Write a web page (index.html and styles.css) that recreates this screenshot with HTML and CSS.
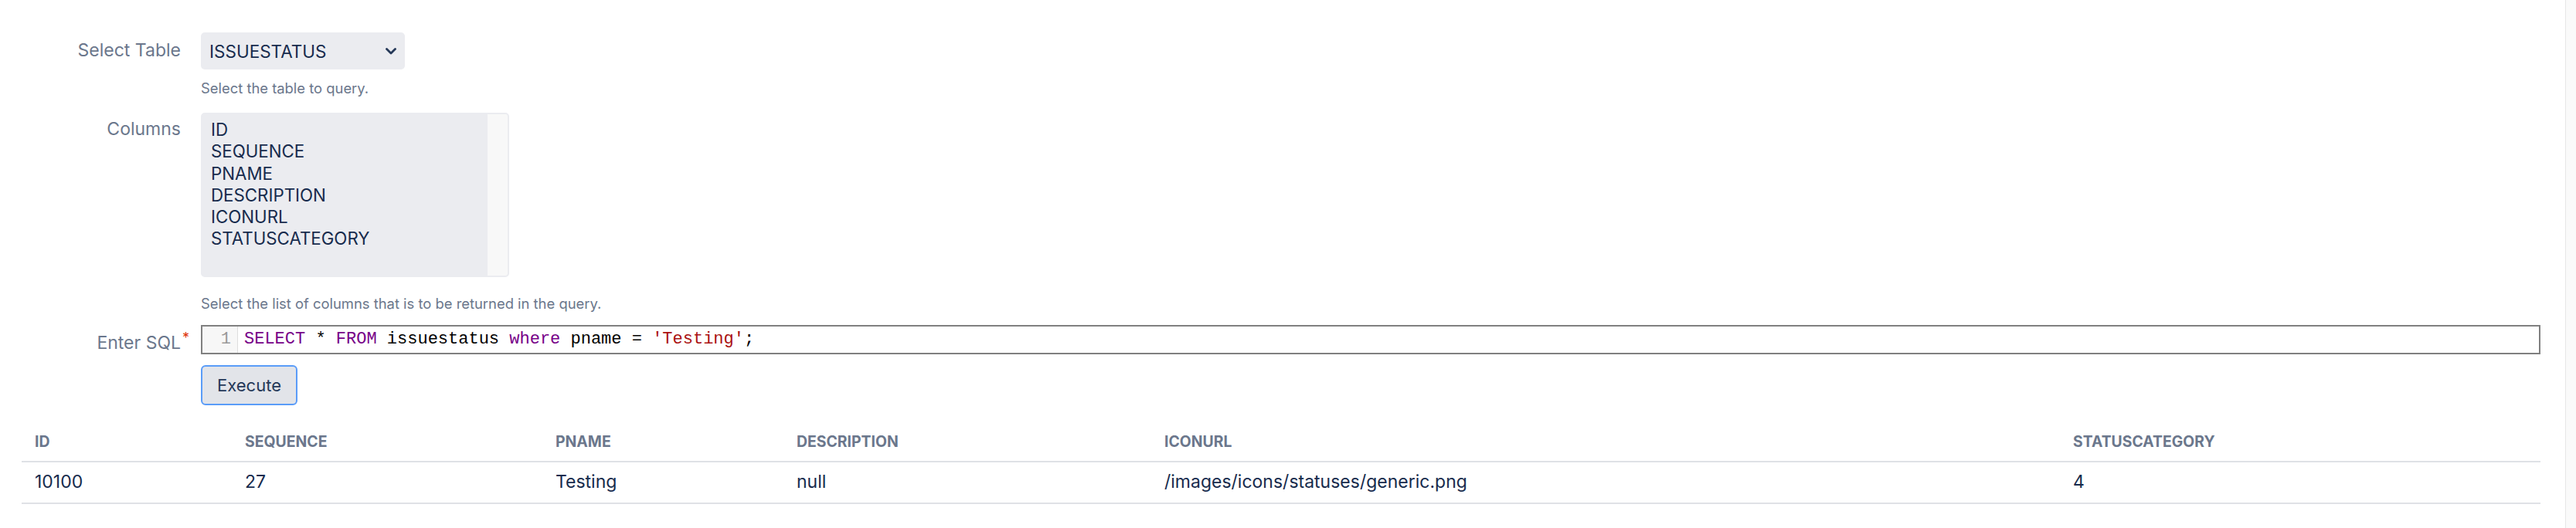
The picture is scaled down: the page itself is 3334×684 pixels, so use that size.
FILE: index.html
```html
<!DOCTYPE html>
<html lang="en">
<head>
<meta charset="utf-8">
<title>SQL Query</title>
<link rel="stylesheet" href="styles.css">
</head>
<body>
<div class="page">
  <main class="main">
    <form class="form">
      <div class="field field-table">
        <div class="label"><span class="label-text">Select Table</span></div>
        <div class="control">
          <div class="select">
            <span>ISSUESTATUS</span>
            <svg class="chevron" width="14" height="9" viewBox="0 0 14 9"><path d="M1.5 1.5 L7 7 L12.5 1.5" fill="none" stroke="#253858" stroke-width="2.8" stroke-linecap="round" stroke-linejoin="round"/></svg>
          </div>
          <div class="help help-table">Select the table to query.</div>
        </div>
      </div>
      <div class="field field-columns">
        <div class="label label-columns"><span class="label-text">Columns</span></div>
        <div class="control">
          <div class="listbox">
            <div class="options">
              <div class="option">ID</div>
              <div class="option">SEQUENCE</div>
              <div class="option">PNAME</div>
              <div class="option">DESCRIPTION</div>
              <div class="option">ICONURL</div>
              <div class="option">STATUSCATEGORY</div>
            </div>
            <div class="list-track"></div>
          </div>
          <div class="help help-columns">Select the list of columns that is to be returned in the query.</div>
        </div>
      </div>
      <div class="field field-sql">
        <div class="label"><span class="label-text">Enter SQL<span class="req">*</span></span></div>
        <div class="control">
          <div class="editor">
            <div class="gutter">1</div>
            <div class="code"><span class="kw">SELECT</span> * <span class="kw">FROM</span> issuestatus <span class="kw">where</span> pname = <span class="str">'Testing'</span>;</div>
          </div>
          <button type="button" class="btn">Execute</button>
        </div>
      </div>
    </form>
    <table class="results">
      <thead>
        <tr>
          <th class="c1">ID</th>
          <th class="c2">SEQUENCE</th>
          <th class="c3">PNAME</th>
          <th class="c4">DESCRIPTION</th>
          <th class="c5">ICONURL</th>
          <th class="c6">STATUSCATEGORY</th>
        </tr>
      </thead>
      <tbody>
        <tr>
          <td>10100</td>
          <td>27</td>
          <td>Testing</td>
          <td>null</td>
          <td>/images/icons/statuses/generic.png</td>
          <td>4</td>
        </tr>
      </tbody>
    </table>
  </main>
  <div class="scrolltrack"></div>
</div>
</body>
</html>
```
FILE: styles.css
```css
html, body {
  margin: 0;
  padding: 0;
  background: #ffffff;
}
body {
  font-family: Inter, "Noto Sans", "Liberation Sans", sans-serif;
  color: #172b4d;
}
.page {
  display: flex;
  min-height: 684px;
}
.main {
  flex: 1;
  padding: 42px 32px 0 28px;
  min-width: 0;
}
.scrolltrack {
  width: 13px;
  flex: none;
  background: #fafafa;
  border-left: 1px solid #e6e6e6;
}
.form {
  margin: 0;
}
.field {
  display: grid;
  grid-template-columns: 206px 1fr;
  column-gap: 26px;
}
.field-columns {
  margin-top: 20px;
}
.field-sql {
  margin-top: 16px;
}
.label {
  text-align: right;
  color: #6b778c;
  font-size: 23px;
  line-height: 28px;
  padding-top: 9px;
}
.label-columns {
  padding-top: 7px;
}
.label-text {
  position: relative;
}
.req {
  position: absolute;
  left: 100%;
  top: -2px;
  margin-left: 2px;
  color: #de350b;
  font-size: 18px;
  line-height: 20px;
}
.control {
  min-width: 0;
}
.select {
  box-sizing: border-box;
  width: 264px;
  height: 48px;
  background: #ebecf0;
  border-radius: 5px;
  display: flex;
  align-items: center;
  justify-content: space-between;
  padding: 0 11px 0 11px;
  font-size: 22.5px;
  color: #172b4d;
}
.chevron {
  display: block;
}
.help {
  font-size: 18.4px;
  line-height: 24px;
  color: #6b778c;
}
.help-table {
  margin-top: 12px;
}
.help-columns {
  margin-top: 22px;
}
.listbox {
  box-sizing: border-box;
  width: 399px;
  height: 213px;
  background: #ebecf0;
  border: 2px solid #ebecf0;
  border-radius: 5px;
  display: flex;
}
.options {
  flex: 1;
  padding: 6px 11px;
}
.option {
  font-size: 22.3px;
  line-height: 28.3px;
  color: #172b4d;
  white-space: nowrap;
}
.list-track {
  width: 26px;
  flex: none;
  background: #f8f8f8;
  border-radius: 0 3px 3px 0;
}
.editor {
  box-sizing: border-box;
  height: 38px;
  border: 2px solid #808080;
  display: flex;
  background: #ffffff;
  font-family: "Liberation Mono", "DejaVu Sans Mono", monospace;
  font-size: 22px;
  line-height: 34px;
}
.gutter {
  box-sizing: border-box;
  width: 46px;
  flex: none;
  background: #f7f7f7;
  border-right: 1px solid #dddddd;
  color: #999999;
  text-align: right;
  padding-right: 8px;
}
.code {
  padding-left: 8px;
  color: #000000;
  white-space: pre;
}
.kw {
  color: #770088;
}
.str {
  color: #aa1111;
}
.btn {
  display: block;
  box-sizing: border-box;
  margin-top: 14px;
  width: 125px;
  height: 52px;
  border: 2px solid #5a9cf8;
  border-radius: 6px;
  background: #e2e4e9;
  color: #253858;
  font-family: Inter, "Noto Sans", "Liberation Sans", sans-serif;
  font-size: 22px;
  padding: 0;
}
.results {
  margin-top: 21px;
  width: 3260px;
  border-collapse: collapse;
  table-layout: fixed;
}
.results th {
  text-align: left;
  font-weight: 700;
  font-size: 19.4px;
  line-height: 24px;
  color: #6b778c;
  padding: 14px 17px 13px;
  border-bottom: 2px solid #dfe1e6;
  white-space: nowrap;
}
.results td {
  text-align: left;
  font-size: 23px;
  line-height: 28px;
  color: #172b4d;
  padding: 11px 17px 13px;
  border-bottom: 2px solid #dfe1e6;
  white-space: nowrap;
}
.c1 { width: 238px; }
.c2 { width: 368px; }
.c3 { width: 278px; }
.c4 { width: 442px; }
.c5 { width: 1142px; }
.c6 { width: 588px; }
```
